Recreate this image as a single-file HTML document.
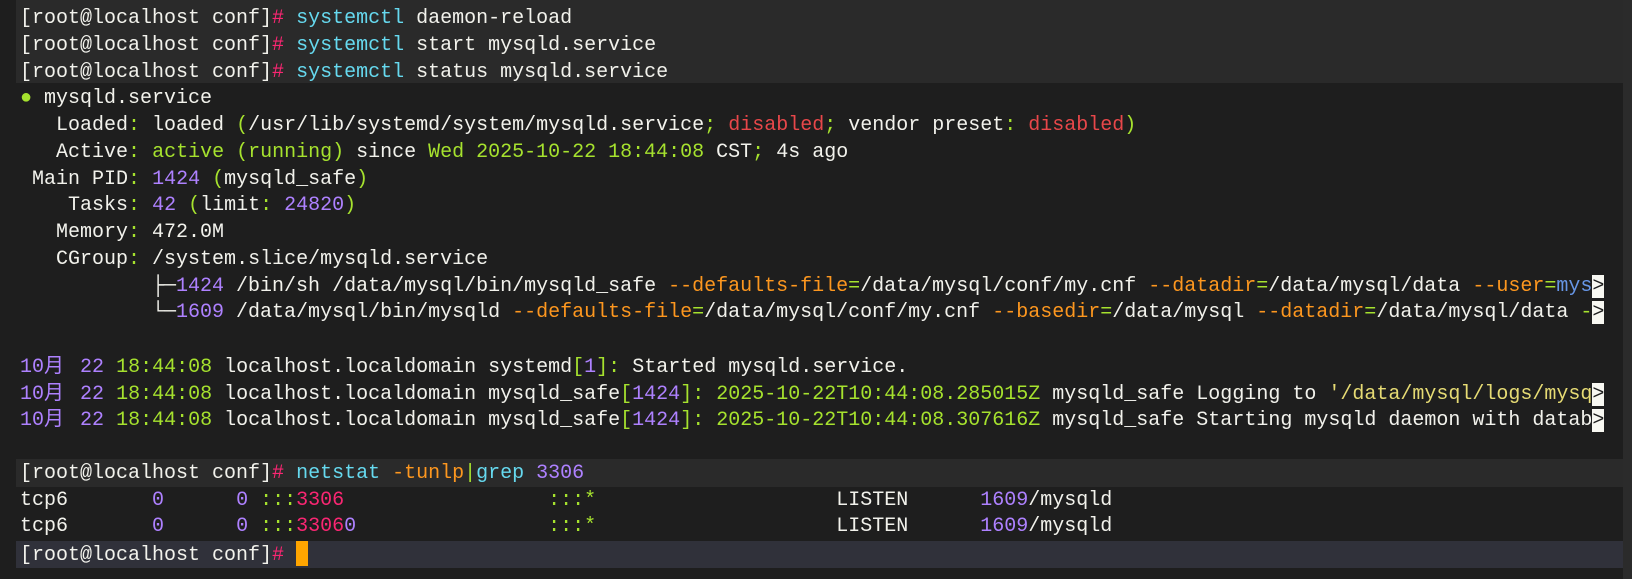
<!DOCTYPE html>
<html><head><meta charset="utf-8"><style>
html,body{margin:0;padding:0;background:#1e1e1e;width:1632px;height:579px;overflow:hidden}
.strip{position:absolute;left:1623px;top:0;width:9px;height:579px;background:#2b2b2b}
.band{position:absolute;left:16px;width:1607px;background:#2a2a2a}
.term{position:absolute;left:20px;top:6px;font-family:"Liberation Mono","Noto Sans CJK SC",monospace;font-size:20px;line-height:26.75px;color:#f2f2ec}
.l{height:26.75px;white-space:pre;overflow:hidden}
.c{color:#66d9ef}.p{color:#f92672}.g{color:#a6e22e}.v{color:#ae81ff}.o{color:#fd971f}.y{color:#e6db74}.r{color:#e8474a}.b{color:#6796e6}
.m{background:#f8f8f2;color:#1e1e1e}
.cur{display:inline-block;width:12px;height:25px;background:#ffa500;vertical-align:-6px}
.cj{display:inline-block;width:24px;font-family:"Noto Sans CJK SC",sans-serif;line-height:20px}
</style></head><body>
<div class="strip"></div>
<div class="band" style="top:0;height:83px"></div>
<div class="band" style="top:459px;height:28px"></div>
<div class="band" style="top:541px;height:27px;background:#30313a"></div>
<div class="term">
<div class="l">[root@localhost conf]<span class="p">#</span> <span class="c">systemctl</span> daemon-reload</div>
<div class="l">[root@localhost conf]<span class="p">#</span> <span class="c">systemctl</span> start mysqld.service</div>
<div class="l">[root@localhost conf]<span class="p">#</span> <span class="c">systemctl</span> status mysqld.service</div>
<div class="l"><span class="g">●</span> mysqld.service</div>
<div class="l">   Loaded<span class="g">:</span> loaded <span class="g">(</span>/usr/lib/systemd/system/mysqld.service<span class="g">;</span> <span class="r">disabled</span><span class="g">;</span> vendor preset<span class="g">:</span> <span class="r">disabled</span><span class="g">)</span></div>
<div class="l">   Active<span class="g">:</span> <span class="g">active (running)</span> since <span class="g">Wed 2025-10-22 18:44:08</span> CST<span class="g">;</span> 4s ago</div>
<div class="l"> Main PID<span class="g">:</span> <span class="v">1424</span> <span class="g">(</span>mysqld_safe<span class="g">)</span></div>
<div class="l">    Tasks<span class="g">:</span> <span class="v">42</span> <span class="g">(</span>limit<span class="g">:</span> <span class="v">24820</span><span class="g">)</span></div>
<div class="l">   Memory<span class="g">:</span> 472.0M</div>
<div class="l">   CGroup<span class="g">:</span> /system.slice/mysqld.service</div>
<div class="l">           ├─<span class="v">1424</span> /bin/sh /data/mysql/bin/mysqld_safe <span class="o">--defaults-file</span><span class="g">=</span>/data/mysql/conf/my.cnf <span class="o">--datadir</span><span class="g">=</span>/data/mysql/data <span class="o">--user</span><span class="g">=</span><span class="b">mys</span><span class="m">&gt;</span></div>
<div class="l">           └─<span class="v">1609</span> /data/mysql/bin/mysqld <span class="o">--defaults-file</span><span class="g">=</span>/data/mysql/conf/my.cnf <span class="o">--basedir</span><span class="g">=</span>/data/mysql <span class="o">--datadir</span><span class="g">=</span>/data/mysql/data <span class="g">-</span><span class="m">&gt;</span></div>
<div class="l"> </div>
<div class="l"><span class="v">10</span><span class="cj v">月</span> <span class="v">22</span> <span class="g">18:44:08</span> localhost.localdomain systemd<span class="g">[</span><span class="v">1</span><span class="g">]:</span> Started mysqld.service.</div>
<div class="l"><span class="v">10</span><span class="cj v">月</span> <span class="v">22</span> <span class="g">18:44:08</span> localhost.localdomain mysqld_safe<span class="g">[</span><span class="v">1424</span><span class="g">]:</span> <span class="g">2025-10-22T10:44:08.285015Z</span> mysqld_safe Logging to <span class="y">'/data/mysql/logs/mysq</span><span class="m">&gt;</span></div>
<div class="l"><span class="v">10</span><span class="cj v">月</span> <span class="v">22</span> <span class="g">18:44:08</span> localhost.localdomain mysqld_safe<span class="g">[</span><span class="v">1424</span><span class="g">]:</span> <span class="g">2025-10-22T10:44:08.307616Z</span> mysqld_safe Starting mysqld daemon with datab<span class="m">&gt;</span></div>
<div class="l"> </div>
<div class="l">[root@localhost conf]<span class="p">#</span> <span class="c">netstat</span> <span class="o">-tunlp</span><span class="g">|</span><span class="c">grep</span> <span class="v">3306</span></div>
<div class="l">tcp6       <span class="v">0</span>      <span class="v">0</span> <span class="g">:::</span><span class="p">3306</span>                 <span class="g">:::*</span>                    LISTEN      <span class="v">1609</span>/mysqld</div>
<div class="l">tcp6       <span class="v">0</span>      <span class="v">0</span> <span class="g">:::</span><span class="p">3306</span><span class="v">0</span>                <span class="g">:::*</span>                    LISTEN      <span class="v">1609</span>/mysqld</div>
<div class="l">[root@localhost conf]<span class="p">#</span> <span class="cur"></span></div>
</div>
</body></html>
